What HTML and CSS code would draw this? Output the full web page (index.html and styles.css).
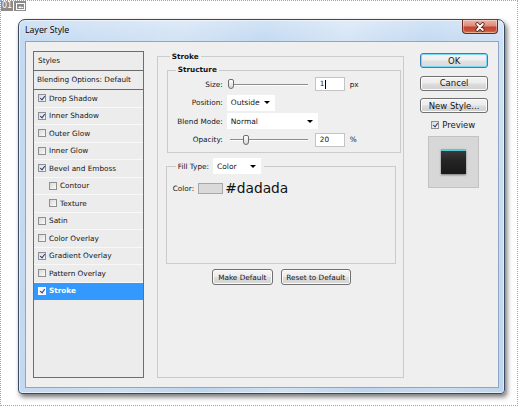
FILE: index.html
```html
<!DOCTYPE html>
<html>
<head>
<meta charset="utf-8">
<title>Layer Style</title>
<link rel="stylesheet" href="styles.css">
</head>
<body>
<div class="canvas">
  <div class="badge">
    <span class="num">01</span>
    <span class="ico"><svg width="9" height="7" viewBox="0 0 9 7"><rect x="0.5" y="0.5" width="8" height="6" fill="none" stroke="#fff" stroke-width="1"/><path d="M2 5 L4 3 L5.5 4.5 L6.5 3.5 L7.5 5 Z" fill="#fff"/></svg></span>
  </div>
  <div class="window">
    <div class="titlebar">
      <span class="title">Layer Style</span>
      <span class="close"><svg width="12" height="10" viewBox="0 0 12 10"><path d="M3.2 2 L8.8 8 M8.8 2 L3.2 8" stroke="#5a2119" stroke-width="3.6" stroke-linecap="round"/><path d="M3.2 2 L8.8 8 M8.8 2 L3.2 8" stroke="#ffffff" stroke-width="1.9" stroke-linecap="round"/></svg></span>
    </div>
    <div class="client">
      <div class="styles">
        <div class="hdr">Styles</div>
        <div class="hdr hdr2">Blending Options: Default</div>
        <div class="item"><span class="cb on"></span>Drop Shadow</div>
        <div class="item"><span class="cb on"></span>Inner Shadow</div>
        <div class="item"><span class="cb"></span>Outer Glow</div>
        <div class="item"><span class="cb"></span>Inner Glow</div>
        <div class="item"><span class="cb on"></span>Bevel and Emboss</div>
        <div class="item sub"><span class="cb"></span>Contour</div>
        <div class="item sub"><span class="cb"></span>Texture</div>
        <div class="item"><span class="cb"></span>Satin</div>
        <div class="item"><span class="cb"></span>Color Overlay</div>
        <div class="item"><span class="cb on"></span>Gradient Overlay</div>
        <div class="item"><span class="cb"></span>Pattern Overlay</div>
        <div class="item sel"><span class="cb on"></span>Stroke</div>
      </div>

      <fieldset class="stroke">
        <legend>Stroke</legend>
        <fieldset class="structure">
          <legend>Structure</legend>
          <div class="grid">
            <label class="lbl">Size:</label>
            <div class="ctl">
              <span class="slider"><span class="thumb" style="margin-left:0px"></span></span>
              <span class="field">1<span class="caret"></span></span>
              <span class="unit">px</span>
            </div>
            <label class="lbl">Position:</label>
            <div class="ctl">
              <span class="select w48">Outside<i class="arr"></i></span>
            </div>
            <label class="lbl">Blend Mode:</label>
            <div class="ctl">
              <span class="select w91">Normal<i class="arr"></i></span>
            </div>
            <label class="lbl">Opacity:</label>
            <div class="ctl">
              <span class="slider"><span class="thumb" style="margin-left:15px"></span></span>
              <span class="field">20</span>
              <span class="unit">%</span>
            </div>
          </div>
        </fieldset>

        <fieldset class="fill">
          <legend><span class="fl">Fill Type:</span><span class="select w48">Color<i class="arr"></i></span></legend>
          <div class="color-row">
            <span>Color:</span>
            <span class="swatch"></span>
            <span class="hex">#dadada</span>
          </div>
        </fieldset>

        <div class="btnrow">
          <span class="btn w61">Make Default</span>
          <span class="btn w70">Reset to Default</span>
        </div>
      </fieldset>

      <div class="actions">
        <span class="bbtn default">OK</span>
        <span class="bbtn">Cancel</span>
        <span class="bbtn">New Style...</span>
        <div class="preview-row"><span class="cb on"></span>Preview</div>
        <div class="preview"><span class="swatch-3d"></span></div>
      </div>
    </div>
  </div>
</div>
</body>
</html>
```

FILE: styles.css
```css
* { box-sizing: border-box; }
html, body { margin: 0; padding: 0; background: #ffffff; }
body {
  width: 520px;
  height: 411px;
  overflow: hidden;
  font-family: "DejaVu Sans", Verdana, sans-serif;
  font-size: 7.3px;
  color: #151515;
}

.canvas {
  position: relative;
  width: 518px;
  height: 406px;
  border: 1px dotted #8ea6d9;
  padding: 18px 0 0 17px;
}

.badge {
  position: absolute;
  left: 0;
  top: 0;
  display: flex;
  gap: 1px;
  height: 10px;
}
.badge .num {
  background: #8b8b8b;
  color: #fff;
  font-size: 8px;
  line-height: 10px;
  padding: 0 1px;
}
.badge .ico {
  width: 12px;
  background: #8b8b8b;
  display: flex;
  align-items: center;
  justify-content: center;
}

/* window frame */
.window {
  width: 487px;
  height: 375px;
  border: 1px solid #3b4b5f;
  border-radius: 7px 7px 4px 4px;
  background:
    linear-gradient(100deg, rgba(255,255,255,0) 0%, rgba(255,255,255,.25) 30%, rgba(255,255,255,0) 45%, rgba(255,255,255,.3) 60%, rgba(255,255,255,0) 75%, rgba(255,255,255,.2) 90%, rgba(255,255,255,0) 100%),
    linear-gradient(180deg, #d2e3f6 0, #c4daf1 21px, #bdd5ee 100%);
  box-shadow: 2px 3px 5px rgba(0,0,0,.55), inset 0 0 0 1px rgba(255,255,255,.55);
  padding: 0 5px 5px 6px;
  display: flex;
  flex-direction: column;
}
.titlebar {
  height: 21px;
  display: flex;
  justify-content: space-between;
  align-items: flex-start;
}
.title {
  font-family: "Open Sans", "Noto Sans", sans-serif;
  font-size: 8.8px;
  line-height: 21px;
  color: #000;
}
.close {
  margin-top: -1px;
  margin-right: 1px;
  width: 36px;
  height: 15px;
  border: 1px solid #6b2a22;
  border-top-color: #7a3a30;
  border-radius: 0 0 4px 4px;
  background: linear-gradient(180deg, #ebb3a6 0%, #dc8d7b 45%, #c5442f 55%, #c8553c 85%, #dc8a63 100%);
  box-shadow: inset 0 0 0 1px rgba(255,255,255,.35);
  display: flex;
  align-items: center;
  justify-content: center;
}

.client {
  flex: 1;
  border: 1px solid #8ea6c3;
  background: #efefef;
  display: flex;
  padding: 9px 10px 9px 7px;
}

/* styles list */
.styles {
  width: 111px;
  border: 1px solid #6e6e6e;
  background: #ececec;
  display: flex;
  flex-direction: column;
}
.hdr {
  height: 19px;
  line-height: 18px;
  padding-left: 4px;
  border-bottom: 1px solid #6a6a6a;
  white-space: nowrap;
}
.hdr2 { padding-left: 3px; }
.item {
  height: 17.5px;
  display: flex;
  align-items: center;
  padding-left: 4px;
  border-bottom: 1px solid #f8f8f8;
  white-space: nowrap;
}
.item.sub { padding-left: 15px; }
.item.sel {
  background: #3399ff;
  color: #fff;
  font-weight: bold;
  border-bottom-color: #3399ff;
}
.cb {
  position: relative;
  flex: none;
  width: 8px;
  height: 8px;
  margin-right: 3px;
  border: 1px solid #8f8f8f;
  background: linear-gradient(135deg, #d9d9d9, #fbfbfb);
}
.item.sel .cb { border-color: #fff; background: #f4f4f4; }
.cb.on::after {
  content: "";
  position: absolute;
  left: 1.6px;
  top: -0.2px;
  width: 2px;
  height: 4px;
  border: solid #2e4177;
  border-width: 0 1.4px 1.4px 0;
  transform: rotate(38deg);
}

/* stroke group */
fieldset { margin: 0; min-width: 0; }
.stroke {
  margin-left: 13px;
  width: 248px;
  padding: 0 3px 0 9px;
  border: 1px solid #cbcbcb;
}
.stroke > legend {
  margin-left: 3px;
  padding: 0 2px;
  font-weight: bold;
  line-height: 11px;
}
.structure {
  margin-top: 3px;
  width: 234px;
  padding: 0 0 3px 0;
  border: 1px solid #cbcbcb;
}
.structure > legend {
  margin-left: 8px;
  padding: 0 2px;
  font-weight: bold;
  line-height: 10px;
}
.grid {
  display: grid;
  grid-template-columns: 55px auto;
  column-gap: 5px;
  grid-auto-rows: 18.5px;
  align-items: center;
}
.lbl { text-align: right; white-space: nowrap; }
.ctl { display: flex; align-items: center; }

.slider {
  position: relative;
  width: 80px;
  height: 11px;
  display: flex;
  align-items: center;
}
.slider::before {
  content: "";
  position: absolute;
  left: 2px;
  right: 0;
  top: 5px;
  height: 1px;
  background: #8c8c8c;
  box-shadow: 0 1px 0 #fff;
}
.thumb {
  position: relative;
  width: 6px;
  height: 10px;
  border: 1px solid #6d6d6d;
  border-radius: 2px 2px 3px 3px;
  background: linear-gradient(180deg, #ffffff, #d6d6d6);
}
.field {
  margin-left: 7px;
  width: 30px;
  height: 14px;
  background: #fff;
  border: 1px solid #c4c4c4;
  padding-left: 4px;
  line-height: 12px;
  display: flex;
  align-items: center;
}
.caret {
  width: 1px;
  height: 9px;
  background: #000;
  margin-left: 1px;
}
.unit { margin-left: 5px; }

.select {
  position: relative;
  height: 16px;
  background: #fff;
  padding-left: 4px;
  display: flex;
  align-items: center;
  justify-content: space-between;
  padding-right: 5px;
  font-size: 7.5px;
}
.w48 { width: 48px; }
.w91 { width: 91px; }
.ctl .select { margin-left: -1px; }
.arr {
  width: 0;
  height: 0;
  border-left: 3px solid transparent;
  border-right: 3px solid transparent;
  border-top: 3.5px solid #000;
}

.fill {
  margin: 5px 0 0 -1px;
  width: 230px;
  height: 106px;
  padding: 0;
  border: 1px solid #cbcbcb;
}
.fill > legend {
  margin-left: 9px;
  padding: 0 3px 0 2px;
  display: flex;
  align-items: center;
}
.fl { margin-right: 4px; }
.color-row {
  margin-top: 8px;
  padding-left: 6px;
  display: flex;
  align-items: center;
  height: 12px;
}
.swatch {
  margin-left: 4px;
  width: 25px;
  height: 11px;
  border: 1px solid #a8a8a8;
  background: #dadada;
}
.hex {
  margin-left: 2px;
  font-size: 13.8px;
  line-height: 12px;
  color: #111;
}

.btnrow {
  margin-top: 5px;
  padding-left: 45px;
  display: flex;
  gap: 8px;
}
.btn {
  height: 16px;
  border: 1px solid #707070;
  border-radius: 3px;
  background: linear-gradient(180deg, #f5f5f5 0%, #ebebeb 48%, #dcdcdc 52%, #d5d5d5 100%);
  box-shadow: inset 0 0 0 1px #fbfbfb;
  display: flex;
  align-items: center;
  justify-content: center;
  white-space: nowrap;
}
.w61 { width: 61px; }
.w70 { width: 70px; }

/* right column */
.actions {
  margin-left: 16px;
  width: 68px;
  padding-top: 2px;
  display: flex;
  flex-direction: column;
  font-size: 8.5px;
}
.bbtn {
  height: 15px;
  border: 1px solid #707070;
  border-radius: 3px;
  background: linear-gradient(180deg, #f4f4f4 0%, #ebebeb 48%, #dddddd 52%, #cfcfcf 100%);
  box-shadow: inset 0 0 0 1px #fcfcfc;
  display: flex;
  align-items: center;
  justify-content: center;
  margin-bottom: 7.5px;
  white-space: nowrap;
}
.bbtn.default {
  border-color: #3c7fb1;
  box-shadow: inset 0 0 0 1px #7fd6f5;
  background: linear-gradient(180deg, #f6f6f6 0%, #eeeeee 48%, #e2e2e2 52%, #d9d9d9 100%);
}
.preview-row {
  margin-top: -1px;
  height: 11px;
  padding-left: 11px;
  display: flex;
  align-items: center;
}
.preview-row .cb { margin-right: 3px; }
.preview {
  margin: 5px 0 0 8px;
  width: 51px;
  height: 52px;
  background: #d7d7d7;
  border: 1px solid #c2c2c2;
  display: flex;
  align-items: center;
  justify-content: center;
}
.swatch-3d {
  width: 25px;
  height: 25px;
  border-top: 2px solid #58c9d6;
  background: linear-gradient(180deg, #3a3a3a 0%, #252525 40%, #191919 100%);
  box-shadow: 0 1px 2px rgba(0,0,0,.45);
}
```
